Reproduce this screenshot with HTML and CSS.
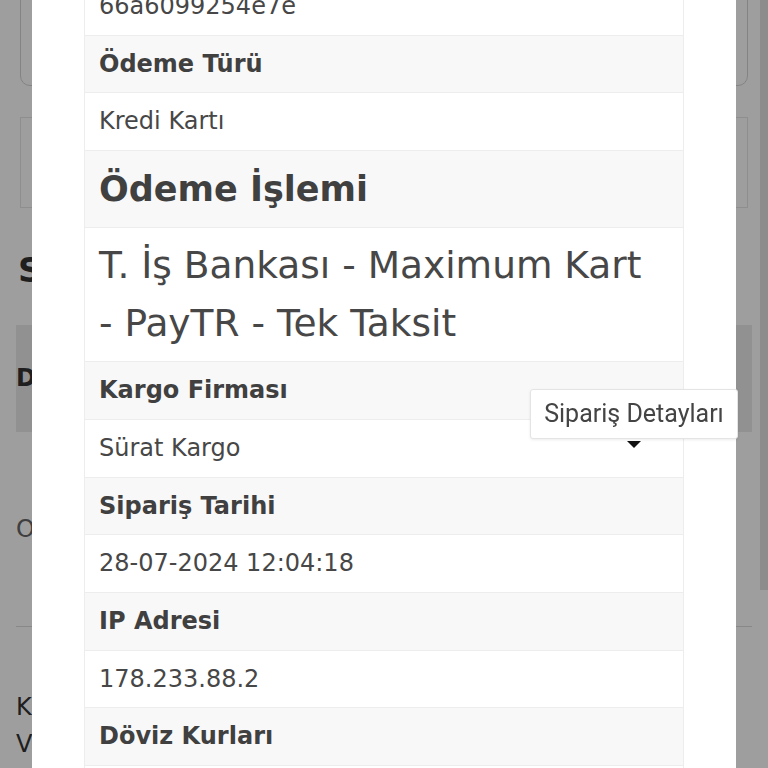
FILE: index.html
```html
<!DOCTYPE html>
<html lang="tr">
<head>
    <meta charset="UTF-8">
    <meta name="viewport" content="width=device-width, initial-scale=1.0">
    <title>Sipariş Detayları</title>
    <link rel="stylesheet" href="styles.css">
</head>
<body>

<!-- arka plandaki sayfa (pencerenin altında kalıyor) -->
<div class="page">
    <div class="card-top"></div>
    <div class="card-box"></div>
    <h2 class="page-title">S</h2>
    <div class="band">D</div>
    <div class="row-status">O</div>
    <div class="info">
        <div>K</div>
        <div>V</div>
    </div>
</div>
<div class="scrollbar"></div>
<div class="overlay"></div>

<!-- sipariş detay penceresi -->
<div class="modal">
    <div class="modal-body">
        <table class="detail-table">
            <tr><td>66a6099254e7e</td></tr>
            <tr class="label"><td>Ödeme Türü</td></tr>
            <tr><td>Kredi Kartı</td></tr>
            <tr class="label big"><td>Ödeme İşlemi</td></tr>
            <tr class="big-value"><td>T. İş Bankası - Maximum Kart <span class="nowrap">- PayTR</span> - Tek Taksit</td></tr>
            <tr class="label"><td>Kargo Firması</td></tr>
            <tr><td>Sürat Kargo</td></tr>
            <tr class="label"><td>Sipariş Tarihi</td></tr>
            <tr><td>28-07-2024 12:04:18</td></tr>
            <tr class="label"><td>IP Adresi</td></tr>
            <tr><td>178.233.88.2</td></tr>
            <tr class="label"><td>Döviz Kurları</td></tr>
            <tr><td>&nbsp;</td></tr>
        </table>
    </div>
</div>

<div class="tooltip">Sipariş Detayları</div>

</body>
</html>
```

FILE: styles.css
```css
body {
    margin: 0;
    background-color: #fff;
    font-family: "DejaVu Sans", sans-serif;
    color: #444;
    overflow: hidden;
}

/* arka plan sayfası */
.page {
    padding: 0 16px;
}

.card-top {
    margin: -40px 4px 0;
    height: 124px;
    border: 1px solid #d4d4d4;
    border-radius: 10px;
}

.card-box {
    margin: 31px 4px 0;
    height: 89px;
    border: 1px solid #e6e6e6;
}

.page-title {
    margin: 42px 0 0 2px;
    font-size: 34px;
    line-height: 40px;
    color: #333;
}

.band {
    margin-top: 35px;
    height: 107px;
    line-height: 107px;
    background-color: #ebebeb;
    font-size: 24px;
    font-weight: bold;
    color: #333;
}

.row-status {
    height: 194px;
    line-height: 194px;
    border-bottom: 1px solid #dcdcdc;
    font-size: 24px;
    color: #666;
}

.info {
    padding-top: 62px;
    font-size: 24px;
    line-height: 37px;
    color: #333;
}

.scrollbar {
    position: fixed;
    top: 0;
    right: 0;
    width: 8px;
    height: 590px;
    background-color: #e2e2e2;
}

.overlay {
    position: fixed;
    inset: 0;
    background-color: rgba(0, 0, 0, 0.38);
}

/* pencere */
.modal {
    position: fixed;
    top: 0;
    bottom: 0;
    left: 32px;
    width: 704px;
    background-color: #fff;
    overflow: hidden;
}

.modal-body {
    padding: 0 52px;
    margin-top: -23px;
}

.detail-table {
    width: 600px;
    border-collapse: collapse;
    border: 1px solid #ededed;
}

.detail-table td {
    padding: 12px 14px;
    border-top: 1px solid #ededed;
    font-size: 24px;
    line-height: 32.7px;
    color: #474747;
}

.detail-table .label td {
    background-color: #f8f8f8;
    font-weight: bold;
    color: #404040;
}

.detail-table .big td {
    font-size: 35px;
    line-height: 52px;
}

.detail-table .big-value td {
    padding: 9px 14px;
    font-size: 37.5px;
    line-height: 57.5px;
}

.nowrap {
    white-space: nowrap;
}

/* ipucu kutusu */
.tooltip {
    position: fixed;
    top: 389px;
    left: 530px;
    width: 206px;
    height: 48px;
    line-height: 48px;
    text-align: center;
    background-color: #fff;
    border: 1px solid #e4e4e4;
    border-radius: 3px;
    box-shadow: 0 1px 3px rgba(0, 0, 0, 0.08);
    font-family: Roboto, sans-serif;
    font-size: 25px;
    color: #444;
}

.tooltip::after {
    content: "";
    position: absolute;
    top: 51px;
    left: 96px;
    border-left: 7px solid transparent;
    border-right: 7px solid transparent;
    border-top: 7px solid #111;
}
```
